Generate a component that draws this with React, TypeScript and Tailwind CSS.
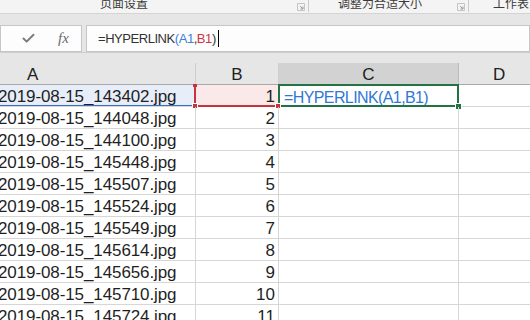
import React from "react";
import { Check } from "lucide-react";

const ROWS: [string, number][] = [
  ["2019-08-15_143402.jpg", 1],
  ["2019-08-15_144048.jpg", 2],
  ["2019-08-15_144100.jpg", 3],
  ["2019-08-15_145448.jpg", 4],
  ["2019-08-15_145507.jpg", 5],
  ["2019-08-15_145524.jpg", 6],
  ["2019-08-15_145549.jpg", 7],
  ["2019-08-15_145614.jpg", 8],
  ["2019-08-15_145656.jpg", 9],
  ["2019-08-15_145710.jpg", 10],
  ["2019-08-15_145724.jpg", 11],
];

const Launcher = ({ className }: { className: string }) => (
  <svg width="8" height="8" viewBox="0 0 8 8" className={className}>
    <path d="M0.5 7.5 V0.5 H7.5 V7.5 Z" fill="none" stroke="#c4c4c4" strokeWidth="1" />
    <path d="M3 3 L6 6 M6 3.5 V6 H3.5" fill="none" stroke="#9a9a9a" strokeWidth="1" />
  </svg>
);

const App: React.FC = () => {
  return (
    <div
      className="w-[530px] h-[320px] overflow-hidden bg-white text-[#1f1f1f]"
      style={{ fontFamily: '"Liberation Sans", Arial, sans-serif' }}
    >
      {/* ribbon group labels, scrolled so only their lower half shows */}
      <div className="h-[14px] bg-[#f4f4f4] border-b border-[#d4d4d4] overflow-hidden">
        <div
          className="flex items-center h-[20px] -mt-[7px] text-[12px] text-[#3a3a3a]"
          style={{ fontFamily: '"Noto Sans CJK SC", "Noto Sans", sans-serif' }}
        >
          <span className="ml-[100px] w-[48px] shrink-0">页面设置</span>
          <Launcher className="ml-[149px] mt-[8px] shrink-0" />
          <div className="ml-[3px] mt-[6px] w-px h-[12px] bg-[#c8c8c8] shrink-0" />
          <span className="ml-[29px] w-[84px] shrink-0">调整为合适大小</span>
          <Launcher className="ml-[35px] mt-[8px] shrink-0" />
          <div className="ml-[3px] mt-[6px] w-px h-[12px] bg-[#c8c8c8] shrink-0" />
          <span className="ml-[24px] shrink-0 whitespace-nowrap">工作表</span>
        </div>
      </div>
      <div className="h-[11px] bg-[#e6e6e6]" />

      {/* formula bar */}
      <div className="h-[27px] flex bg-[#e6e6e6]">
        <div className="w-[82px] bg-[#fdfdfd] border border-[#c6c6c6] flex items-center">
          <Check size={15} strokeWidth={3.2} className="ml-[20px] text-[#7c7c7c]" />
          <span
            className="ml-[22px] text-[15px] italic text-[#6a6a6a]"
            style={{ fontFamily: '"Liberation Serif", serif' }}
          >
            fx
          </span>
        </div>
        <div className="ml-[4px] flex-1 bg-[#fdfdfd] border border-[#c6c6c6] flex items-center">
          <span className="ml-[11px] text-[13px] tracking-[-0.45px] text-[#333]">
            =HYPERLINK<span className="text-[#3f7fd8]">(A1</span>,
            <span className="text-[#d0343e]">B1</span>)
          </span>
          <div className="ml-[2px] w-px h-[17px] bg-black" />
        </div>
      </div>
      <div className="h-[11px] bg-[#e6e6e6] border-t border-[#cdcdcd]" />

      {/* column headers */}
      <div className="flex h-[22px] bg-[#e6e6e6] border-b border-[#a9a9a9] text-[17px] leading-[21px] text-[#202020]">
        <div className="w-[196px] shrink-0 border-r border-[#cdcdcd] pt-[1px] pl-[27px]">A</div>
        <div className="w-[83px] shrink-0 border-r border-[#cdcdcd] pt-[1px] text-center">B</div>
        <div className="w-[180px] shrink-0 bg-[#d2d2d2] border-r border-[#bcbcbc] pt-[1px] text-center">
          C
        </div>
        <div className="flex-1 pt-[1px] pl-[34px]">D</div>
      </div>

      {/* grid */}
      {ROWS.map(([name, n], i) => (
        <div key={n} className="flex h-[22px] border-b border-[#d6d6d6] text-[17px] leading-[21px]">
          <div
            className={`w-[196px] shrink-0 border-r border-[#d6d6d6] overflow-hidden whitespace-nowrap pt-[1px] relative ${
              i === 0 ? "bg-[#e7eef9]" : ""
            }`}
          >
            <span className="block -ml-[2px] tracking-[-0.1px]">{name}</span>
            {i === 0 && (
              <div className="absolute left-0 right-0 -bottom-[1px] h-[2px] bg-[#3b6ec3]" />
            )}
          </div>
          <div
            className={`w-[83px] shrink-0 border-r border-[#d6d6d6] pt-[1px] pr-[3px] text-right relative ${
              i === 0 ? "bg-[#fbe8e8]" : ""
            }`}
          >
            {n}
            {i === 0 && (
              <>
                <div className="absolute -left-[2px] top-0 -bottom-[1px] w-[2px] bg-[#c4343d]" />
                <div className="absolute -left-[2px] right-0 -bottom-[1px] h-[2px] bg-[#c4343d]" />
                <div className="absolute -left-[3px] -top-[1px] w-[4px] h-[3px] bg-[#c4343d]" />
                <div className="absolute -left-[4px] -bottom-[3px] w-[6px] h-[6px] bg-[#c4343d] border border-white" />
                <div className="absolute -right-[4px] -bottom-[3px] w-[6px] h-[6px] bg-[#c4343d] border border-white" />
              </>
            )}
          </div>
          <div className="w-[180px] shrink-0 border-r border-[#d6d6d6] relative">
            {i === 0 && (
              <>
                <span className="block pl-[5px] pt-[2px] text-[16px] tracking-[-0.6px] text-[#2f78d6] underline underline-offset-[2px] whitespace-nowrap">
                  =HYPERLINK(A1,B1)
                </span>
                <div className="absolute -left-[1px] -top-[1px] -right-[1px] -bottom-[1px] border-2 border-[#217346]" />
                <div className="absolute -left-[4px] -bottom-[3px] w-[6px] h-[6px] bg-[#c4343d] border border-white" />
                <div className="absolute -right-[4px] -bottom-[4px] w-[7px] h-[7px] bg-[#217346] border border-white" />
              </>
            )}
          </div>
          <div className="flex-1" />
        </div>
      ))}
    </div>
  );
};

export default App;
